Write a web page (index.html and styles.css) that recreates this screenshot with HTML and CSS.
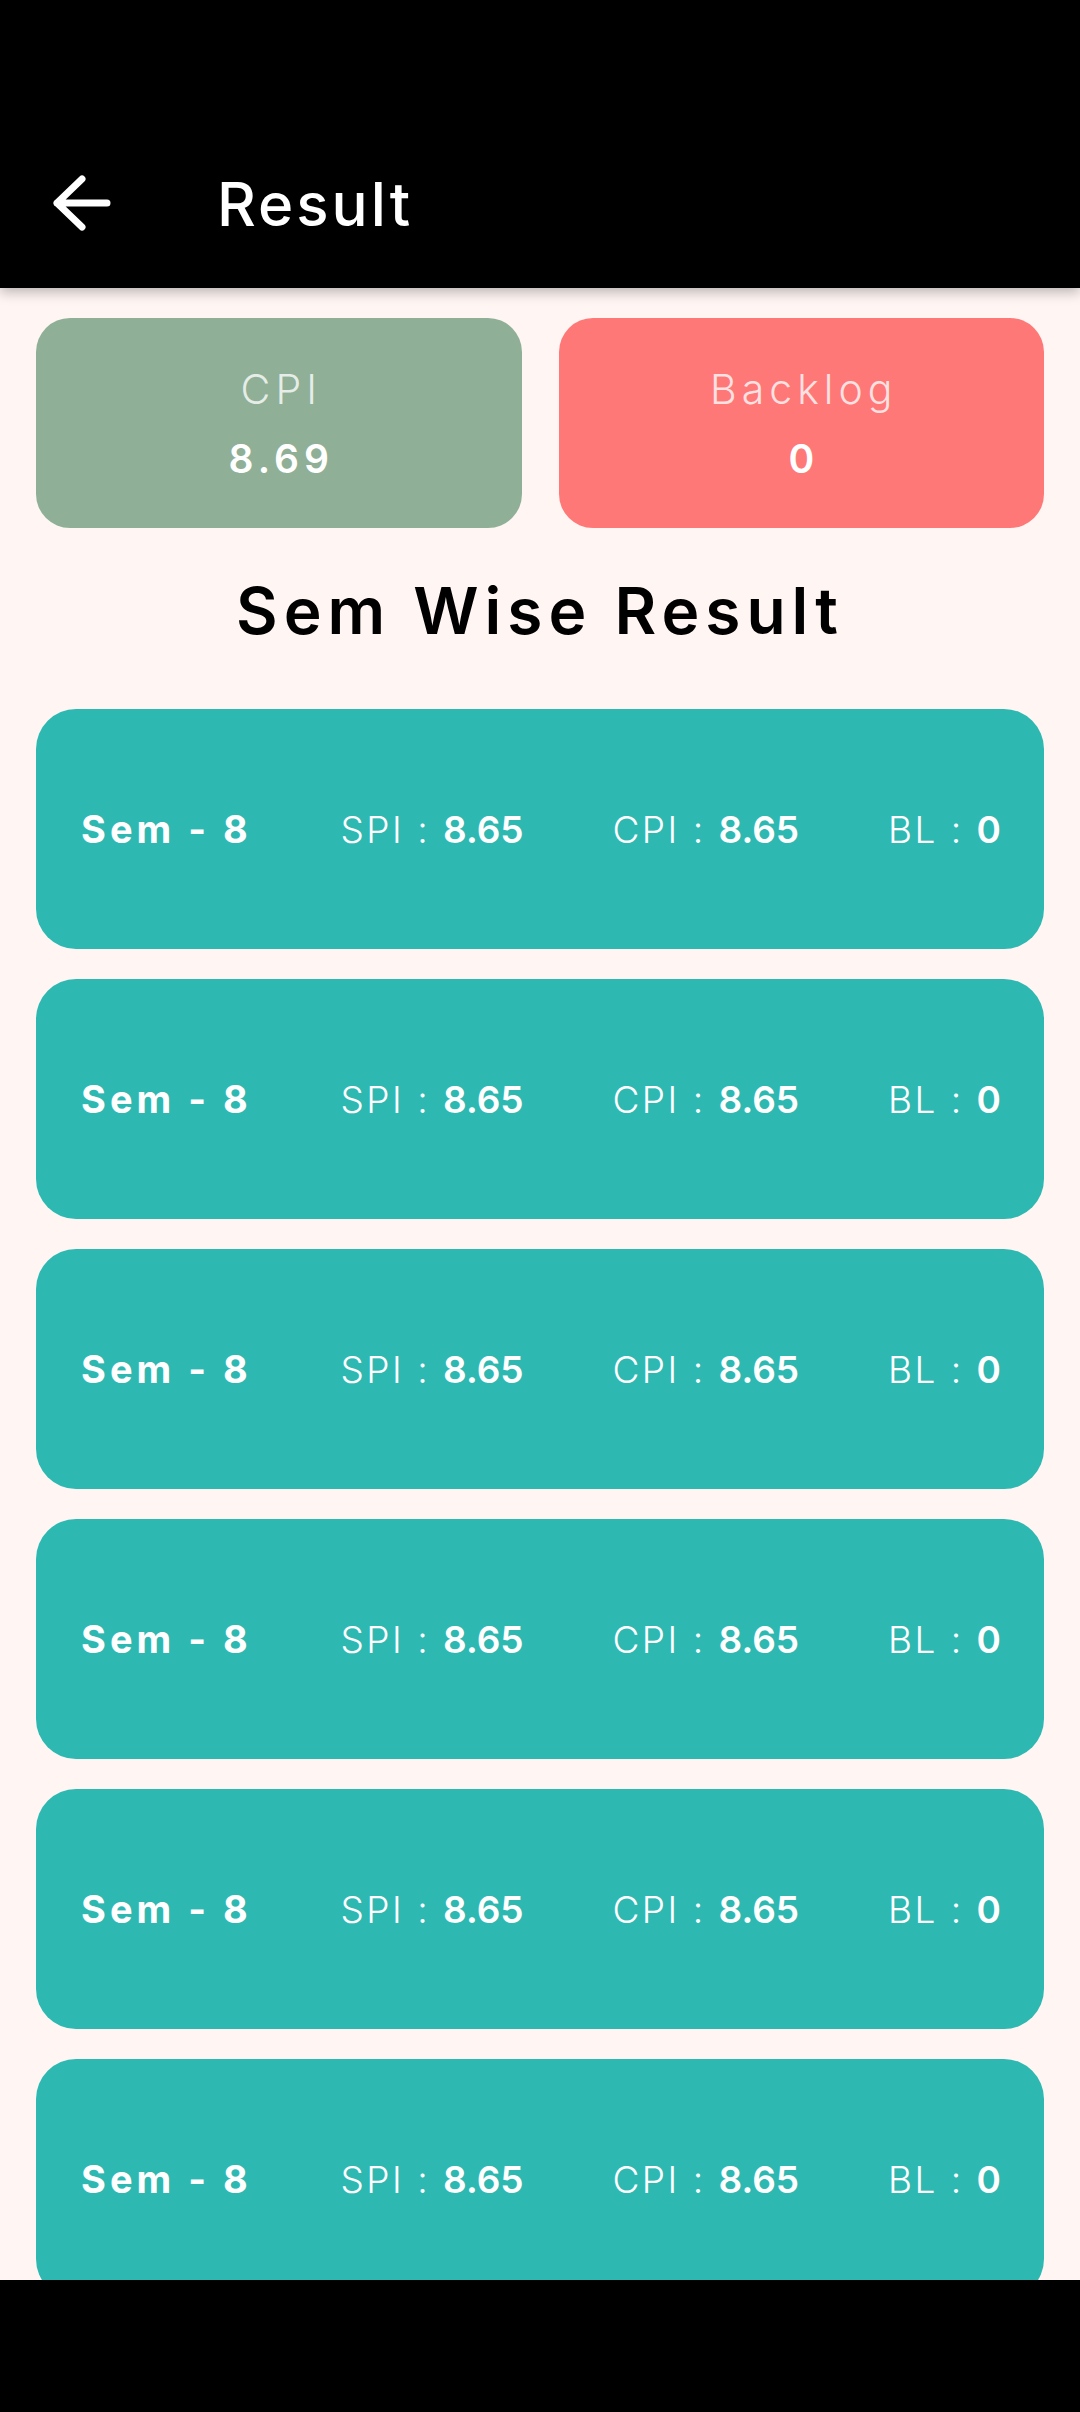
FILE: index.html
```html
<!DOCTYPE html>
<html lang="en">
<head>
    <meta charset="UTF-8">
    <meta name="viewport" content="width=device-width, initial-scale=1.0">
    <title>Result</title>
    <link rel="stylesheet" href="styles.css">
</head>
<body>

    <div class="app">
        <!-- Toolbar -->
        <header class="topbar">
            <div class="toolbar">
                <a href="#" class="back-btn" aria-label="Back">
                    <svg width="64" height="64" viewBox="0 0 64 64">
                        <path d="M7 30 H57 M7 30 L32 6 M7 30 L32 54" fill="none" stroke="#fff" stroke-width="7" stroke-linecap="round" stroke-linejoin="round"/>
                    </svg>
                </a>
                <h1 class="title">Result</h1>
            </div>
        </header>

        <main class="content">
            <div class="summary">
                <div class="summary-card cpi">
                    <span class="summary-label">CPI</span>
                    <span class="summary-value">8.69</span>
                </div>
                <div class="summary-card backlog">
                    <span class="summary-label">Backlog</span>
                    <span class="summary-value">0</span>
                </div>
            </div>

            <h2 class="section-title">Sem Wise Result</h2>

            <div class="sem-list">
                <div class="sem-card">
                    <span class="sem-name">Sem - 8</span>
                    <span class="sem-stat">SPI : <b>8.65</b></span>
                    <span class="sem-stat">CPI : <b>8.65</b></span>
                    <span class="sem-stat">BL : <b>0</b></span>
                </div>
                <div class="sem-card">
                    <span class="sem-name">Sem - 8</span>
                    <span class="sem-stat">SPI : <b>8.65</b></span>
                    <span class="sem-stat">CPI : <b>8.65</b></span>
                    <span class="sem-stat">BL : <b>0</b></span>
                </div>
                <div class="sem-card">
                    <span class="sem-name">Sem - 8</span>
                    <span class="sem-stat">SPI : <b>8.65</b></span>
                    <span class="sem-stat">CPI : <b>8.65</b></span>
                    <span class="sem-stat">BL : <b>0</b></span>
                </div>
                <div class="sem-card">
                    <span class="sem-name">Sem - 8</span>
                    <span class="sem-stat">SPI : <b>8.65</b></span>
                    <span class="sem-stat">CPI : <b>8.65</b></span>
                    <span class="sem-stat">BL : <b>0</b></span>
                </div>
                <div class="sem-card">
                    <span class="sem-name">Sem - 8</span>
                    <span class="sem-stat">SPI : <b>8.65</b></span>
                    <span class="sem-stat">CPI : <b>8.65</b></span>
                    <span class="sem-stat">BL : <b>0</b></span>
                </div>
                <div class="sem-card">
                    <span class="sem-name">Sem - 8</span>
                    <span class="sem-stat">SPI : <b>8.65</b></span>
                    <span class="sem-stat">CPI : <b>8.65</b></span>
                    <span class="sem-stat">BL : <b>0</b></span>
                </div>
            </div>
        </main>

        <!-- System navigation area -->
        <div class="navbar"></div>
    </div>

</body>
</html>
```

FILE: styles.css
```css
/* General Styling */
* {
    box-sizing: border-box;
}

body {
    font-family: 'Inter', 'Noto Sans', sans-serif;
    margin: 0;
    padding: 0;
    background: #000;
    color: #000;
    overflow: hidden;
}

.app {
    display: flex;
    flex-direction: column;
    height: 2412px;
    background: #fff6f4;
}

/* Top Bar */
.topbar {
    position: relative;
    z-index: 2;
    background: #000;
    padding-top: 120px;
    box-shadow: 0 4px 12px rgba(0, 0, 0, 0.28);
}

.toolbar {
    height: 168px;
    display: flex;
    align-items: center;
}

.back-btn {
    display: flex;
    width: 64px;
    height: 64px;
    margin-left: 50px;
    margin-top: 2px;
}

.title {
    margin: 0 0 0 103px;
    font-size: 60px;
    font-weight: 500;
    letter-spacing: 3px;
    color: #fff;
}

/* Content */
.content {
    flex: 1;
    overflow: hidden;
    padding: 30px 36px 0;
}

.summary {
    display: grid;
    grid-template-columns: 1fr 1fr;
    gap: 37px;
}

.summary-card {
    height: 210px;
    border-radius: 34px;
    display: flex;
    flex-direction: column;
    align-items: center;
    justify-content: center;
    gap: 23px;
    color: #fff;
}

.cpi {
    background-color: #8fb096;
}

.backlog {
    background-color: #ff7878;
}

.summary-label {
    font-size: 41px;
    font-weight: 300;
    letter-spacing: 5px;
    line-height: 48px;
    color: rgba(255, 255, 255, 0.78);
    padding-left: 5px;
}

.summary-value {
    font-size: 39px;
    font-weight: 600;
    letter-spacing: 5px;
    line-height: 46px;
    padding-left: 5px;
}

.section-title {
    margin: 43px 0 0;
    text-align: center;
    font-size: 64px;
    font-weight: 600;
    letter-spacing: 6px;
    line-height: 80px;
}

/* Semester Cards */
.sem-list {
    margin-top: 58px;
    display: flex;
    flex-direction: column;
    gap: 30px;
}

.sem-card {
    flex-shrink: 0;
    height: 240px;
    border-radius: 40px;
    background-color: #2eb8b2;
    display: flex;
    align-items: center;
    justify-content: space-between;
    padding: 0 43px 0 45px;
    color: #fff;
    font-size: 38px;
}

.sem-name {
    font-weight: 700;
    letter-spacing: 4px;
}

.sem-stat {
    font-weight: 300;
    font-size: 37px;
    letter-spacing: 2.5px;
}

.sem-stat b {
    font-weight: 600;
    letter-spacing: 0;
}

/* Bottom system bar */
.navbar {
    position: relative;
    z-index: 2;
    height: 132px;
    flex-shrink: 0;
    background: #000;
}
```
